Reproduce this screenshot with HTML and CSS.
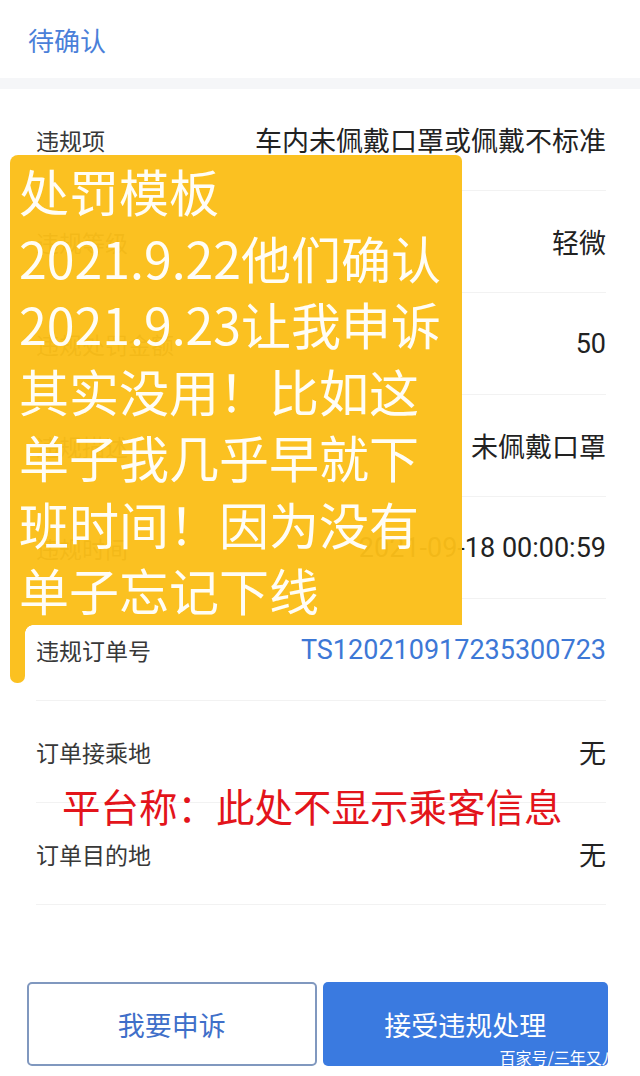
FILE: index.html
```html
<!DOCTYPE html>
<html lang="zh-CN">
<head>
<meta charset="utf-8">
<title>待确认</title>
<link rel="stylesheet" href="styles.css">
</head>
<body>
<div class="page">
  <header class="header">待确认</header>
  <div class="band"></div>
  <section class="list">
    <div class="row"><span class="label">违规项</span><span class="value">车内未佩戴口罩或佩戴不标准</span></div>
    <div class="row"><span class="label">违规等级</span><span class="value">轻微</span></div>
    <div class="row"><span class="label">违规处罚金额</span><span class="value">50</span></div>
    <div class="row"><span class="label">违规描述</span><span class="value">未佩戴口罩</span></div>
    <div class="row"><span class="label">违规时间</span><span class="value">2021-09-18 00:00:59</span></div>
    <div class="row"><span class="label">违规订单号</span><span class="value link">TS120210917235300723</span></div>
    <div class="row"><span class="label">订单接乘地</span><span class="value">无</span></div>
    <div class="row"><span class="label">订单目的地</span><span class="value">无</span></div>
  </section>
  <div class="actions">
    <button class="btn btn-outline">我要申诉</button>
    <button class="btn btn-primary">接受违规处理<span class="watermark">百家号/三年又八</span></button>
  </div>

  <div class="note">处罚模板<br>2021.9.22他们确认<br>2021.9.23让我申诉<br>其实没用！比如这<br>单子我几乎早就下<br>班时间！因为没有<br>单子忘记下线</div>
  <div class="claim">平台称：此处不显示乘客信息</div>
</div>
</body>
</html>
```
FILE: styles.css
```css
* { box-sizing: border-box; }
html, body { margin: 0; padding: 0; background: #fff; }
body {
  font-family: Roboto, "Noto Sans CJK SC", sans-serif;
  width: 640px;
  height: 1076px;
  overflow: hidden;
}
.page { position: relative; width: 640px; height: 1076px; }

.header {
  height: 78px;
  display: flex;
  align-items: center;
  padding-left: 28px;
  font-family: "Noto Sans CJK SC", sans-serif;
  font-size: 26px;
  color: #4a80d9;
}
.band { height: 11px; background: #f5f6f8; }

.list { padding: 0 34px 0 36px; }
.row {
  height: 102px;
  display: flex;
  align-items: center;
  justify-content: space-between;
  border-bottom: 1px solid #f2f2f2;
}
.label {
  font-family: "Noto Sans CJK SC", sans-serif;
  font-size: 23px;
  color: #383838;
}
.value {
  font-family: Roboto, "Noto Sans CJK SC", sans-serif;
  font-size: 27px;
  color: #222;
}
.value.link { color: #3d78d6; }

.actions {
  margin-top: 77px;
  display: flex;
  gap: 6px;
  padding: 0 32px 0 27px;
}
.btn {
  height: 84px;
  flex: 1;
  border-radius: 5px;
  font-family: "Noto Sans CJK SC", sans-serif;
  font-size: 27px;
  position: relative;
  overflow: hidden;
  padding: 0;
}
.btn-outline {
  background: #fff;
  border: 2px solid #8098bf;
  color: #3f6fc9;
}
.btn-primary {
  background: #3a7ae0;
  border: 0;
  color: #fff;
}
.watermark {
  position: absolute;
  left: 177px;
  top: 66px;
  font-size: 16px;
  line-height: 18px;
  white-space: nowrap;
  color: #fff;
}

.note {
  position: absolute;
  left: 10px;
  top: 155px;
  width: 452px;
  height: 470px;
  padding: 2px 0 0 9px;
  background: rgba(251, 190, 24, 0.96);
  border-radius: 8px 6px 0 0;
  font-family: "Noto Sans CJK SC", sans-serif;
  font-size: 50px;
  line-height: 66.5px;
  color: #fffdf6;
  white-space: nowrap;
}
.note::after {
  content: "";
  position: absolute;
  left: 0;
  top: 100%;
  width: 15px;
  height: 58px;
  background: rgba(251, 190, 24, 0.96);
  border-radius: 0 0 7px 7px;
}
.note::before {
  content: "";
  position: absolute;
  left: 15px;
  top: 100%;
  width: 8px;
  height: 8px;
  background: radial-gradient(circle at 100% 100%, transparent 7.5px, rgba(251, 190, 24, 0.96) 8px);
}

.claim {
  position: absolute;
  left: 62px;
  top: 780px;
  font-family: "Noto Sans CJK SC", sans-serif;
  font-size: 38.5px;
  line-height: 50px;
  color: #e3141b;
  white-space: nowrap;
}
```
